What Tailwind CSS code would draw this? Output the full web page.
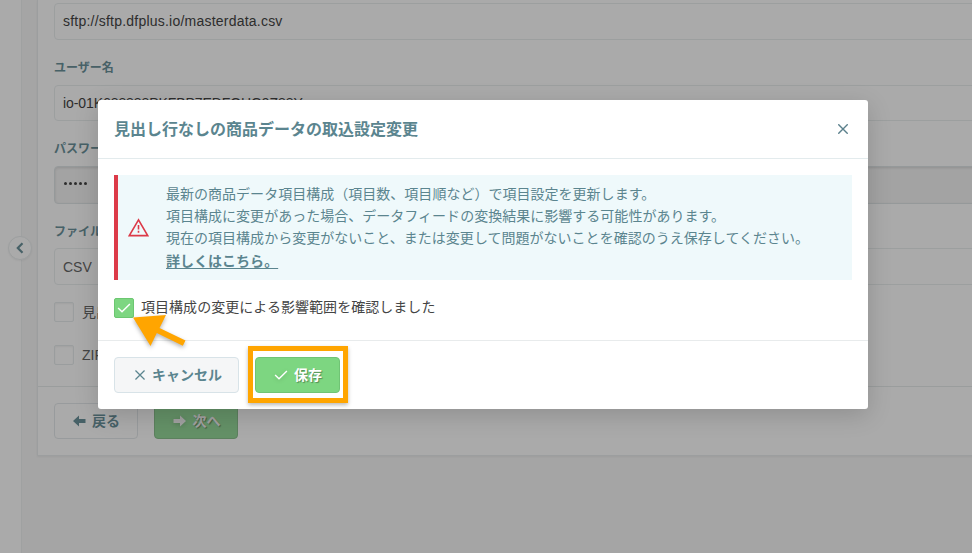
<!DOCTYPE html>
<html lang="ja">
<head>
    <meta charset="UTF-8">
    <meta name="viewport" content="width=device-width, initial-scale=1.0">
    <title>マスターデータ設定</title>
    <script src="https://cdn.jsdelivr.net/npm/@tailwindcss/browser@4"></script>
</head>
<body class="relative h-[553px] overflow-hidden bg-[#f6f6f6] font-['Liberation_Sans','Noto_Sans_CJK_JP',sans-serif] text-sm text-[#444]">

    <!-- Page -->
    <div class="flex h-full">
        <aside class="relative w-[22px] shrink-0 border-r border-[#edf0f1] bg-[#fefefe]">
            <button class="absolute top-[236px] left-2 flex size-6 items-center justify-center rounded-full border border-[#e9edee] bg-[#fefefe] shadow-xs">
                <svg class="h-3 w-2" viewBox="0 0 8 12" fill="none" stroke="#6b919a" stroke-width="2.2"><path d="M6.5 1.2 1.8 6l4.7 4.8"/></svg>
            </button>
        </aside>

        <main class="ml-[15px] h-[456px] w-[960px] shrink-0 border-b border-l border-[#e9eced] bg-[#fefefe] shadow-xs">
            <div class="flex h-[386px] flex-col pt-[3px] pl-4">
                <div class="flex h-[37px] shrink-0 items-center rounded border border-[#e9edee] px-2 pb-[2px] tracking-[0.22px]">sftp://sftp.dfplus.io/masterdata.csv</div>
                <label class="mt-[19px] h-[26px] text-xs leading-[18px] font-bold text-[#6b919a]">ユーザー名</label>
                <div class="flex h-9 shrink-0 items-center rounded border border-[#e9edee] px-2 tracking-[-0.08px]">io-01K688888PKFBP7EDFQHG9Z88Y</div>
                <label class="mt-[19px] h-[26px] text-xs leading-[18px] font-bold text-[#6b919a]">パスワード</label>
                <div class="flex h-[38px] shrink-0 items-center gap-[2px] rounded border border-[#dfe4e6] bg-[#f4f4f4] px-[9px] pb-[3px] shadow-[inset_0_1px_3px_rgba(0,0,0,0.12)]">
                    <i class="size-[3px] rounded-full bg-[#444]"></i><i class="size-[3px] rounded-full bg-[#444]"></i><i class="size-[3px] rounded-full bg-[#444]"></i><i class="size-[3px] rounded-full bg-[#444]"></i><i class="size-[3px] rounded-full bg-[#444]"></i>
                </div>
                <label class="mt-[18px] h-[26px] text-xs leading-5 font-bold text-[#6b919a]">ファイル形式</label>
                <div class="flex h-[37px] shrink-0 items-center rounded border border-[#e9edee] px-2 text-[#666]">CSV</div>
                <div class="mt-[17px] flex h-5 items-center gap-2 text-[#666]">
                    <span class="size-5 rounded-xs border border-[#e6ebec] shadow-[inset_0_1px_2px_rgba(0,0,0,0.06)]"></span>見出し行あり
                </div>
                <div class="mt-[23px] flex h-5 items-center gap-2 text-[#666]">
                    <span class="size-5 rounded-xs border border-[#e6ebec] shadow-[inset_0_1px_2px_rgba(0,0,0,0.06)]"></span>ZIP圧縮
                </div>
            </div>
            <div class="flex gap-4 border-t border-[#e6eaeb] px-4 pt-4">
                <button class="flex h-9 w-[84px] items-center justify-center gap-[6px] rounded border border-[#e3e8ea] pl-px font-bold text-[#6b919a]">
                    <svg class="h-3 w-[13px]" viewBox="0 0 13 12" fill="#6b919a"><path d="M0 6 6 .5V4h6.5v4H6v3.5z"/></svg>戻る
                </button>
                <button class="flex h-9 w-[84px] items-center justify-center gap-[7px] rounded border border-[#8abf8d] bg-[#96d89a] pl-px text-[#f0f0f0] [text-shadow:1px_1px_1px_rgba(0,0,0,0.35)]">
                    <svg class="h-3 w-[13px] drop-shadow-sm" viewBox="0 0 13 12" fill="#f0f0f0"><path d="M13 6 7 .5V4H.5v4H7v3.5z"/></svg><span class="font-bold">次へ</span>
                </button>
            </div>
        </main>
    </div>

    <!-- Backdrop -->
    <div class="absolute inset-0 bg-black/33"></div>

    <!-- Modal -->
    <div class="absolute top-[100px] left-[98px] w-[770px] rounded-[3px] bg-white shadow-[0_6px_24px_rgba(0,0,0,0.16)]">
        <div class="flex h-[59px] items-center justify-between border-b border-[#e3ebed] pr-5 pl-4">
            <h2 class="pt-px text-base font-bold text-[#5b858f]">見出し行なしの商品データの取込設定変更</h2>
            <svg class="size-[10px]" viewBox="0 0 10 10" fill="none" stroke="#5b808c" stroke-width="1.4"><path d="m.3.3 9.4 9.4M9.7.3.3 9.7"/></svg>
        </div>

        <div class="h-[182px] border-b border-[#e8ebec] px-4 pt-4">
            <div class="flex h-[105px] items-center border-l-4 border-[#dc3a48] bg-[#eff9fb] pl-[10px]">
                <svg class="mr-[17px] h-[19px] w-[21px]" viewBox="0 0 21 19" fill="none" stroke="#dc3a48" stroke-width="1.6"><path d="M10.5 1.8 1.3 17.6h18.4z"/><path d="M10.5 7v4.5M10.5 12.7v2"/></svg>
                <p class="pb-[2px] leading-[22px] tracking-[0.02px] text-[#5b858f]">最新の商品データ項目構成（項目数、項目順など）で項目設定を更新します。<br>項目構成に変更があった場合、データフィードの変換結果に影響する可能性があります。<br>現在の項目構成から変更がないこと、または変更して問題がないことを確認のうえ保存してください。<br><a href="#" class="relative top-px font-bold underline underline-offset-2">詳しくはこちら。</a></p>
            </div>
            <label class="mt-[18px] flex h-5 items-center gap-[7px]">
                <span class="flex size-5 items-center justify-center rounded-xs border border-[#6cc771] bg-[#7dd681]">
                    <svg class="h-[10px] w-[14px]" viewBox="0 0 15 11" fill="none" stroke="#fff" stroke-width="1.6"><path d="m1 5.500 4.300 4.200L14 1"/></svg>
                </span>
                <span class="pb-[2px] tracking-[0.04px]">項目構成の変更による影響範囲を確認しました</span>
            </label>
        </div>

        <div class="flex h-[68px] gap-4 px-4 pt-4">
            <button class="flex h-9 w-[125px] items-center justify-center gap-[7px] rounded border border-[#d8e3e8] bg-[#f5f6f7] pl-1 font-bold text-[#5b858f]">
                <svg class="size-[10px]" viewBox="0 0 11 11" fill="none" stroke="#5b858f" stroke-width="1.4"><path d="m.5.5 10 10M10.500.5l-10 10"/></svg>キャンセル
            </button>
            <button class="flex h-9 w-[85px] items-center justify-center gap-[6px] rounded border border-[#70c475] bg-[#7dd681] pl-px font-bold text-white [text-shadow:1px_1px_1px_rgba(0,0,0,0.35)]">
                <svg class="h-[10px] w-[14px] drop-shadow-sm" viewBox="0 0 15 11" fill="none" stroke="#fff" stroke-width="1.5"><path d="m1 5.500 4.300 4.200L14 1"/></svg>保存
            </button>
        </div>
    </div>

    <!-- Callouts -->
    <div class="absolute top-[346px] left-[248px] h-[57px] w-[100px] border-5 border-[#ffa500] shadow-[0_2px_4px_rgba(0,0,0,0.28)]"></div>
    <svg class="absolute top-[310px] left-[128px] h-[42px] w-[66px] drop-shadow-[0_2px_2px_rgba(0,0,0,0.3)]" viewBox="128 310 66 42" fill="#ffa500"><path d="m133 317.500 33-2.500-6.500 13 26 12.500-2.700 5.200-26-12.700-6.300 13z"/></svg>
</body>
</html>
